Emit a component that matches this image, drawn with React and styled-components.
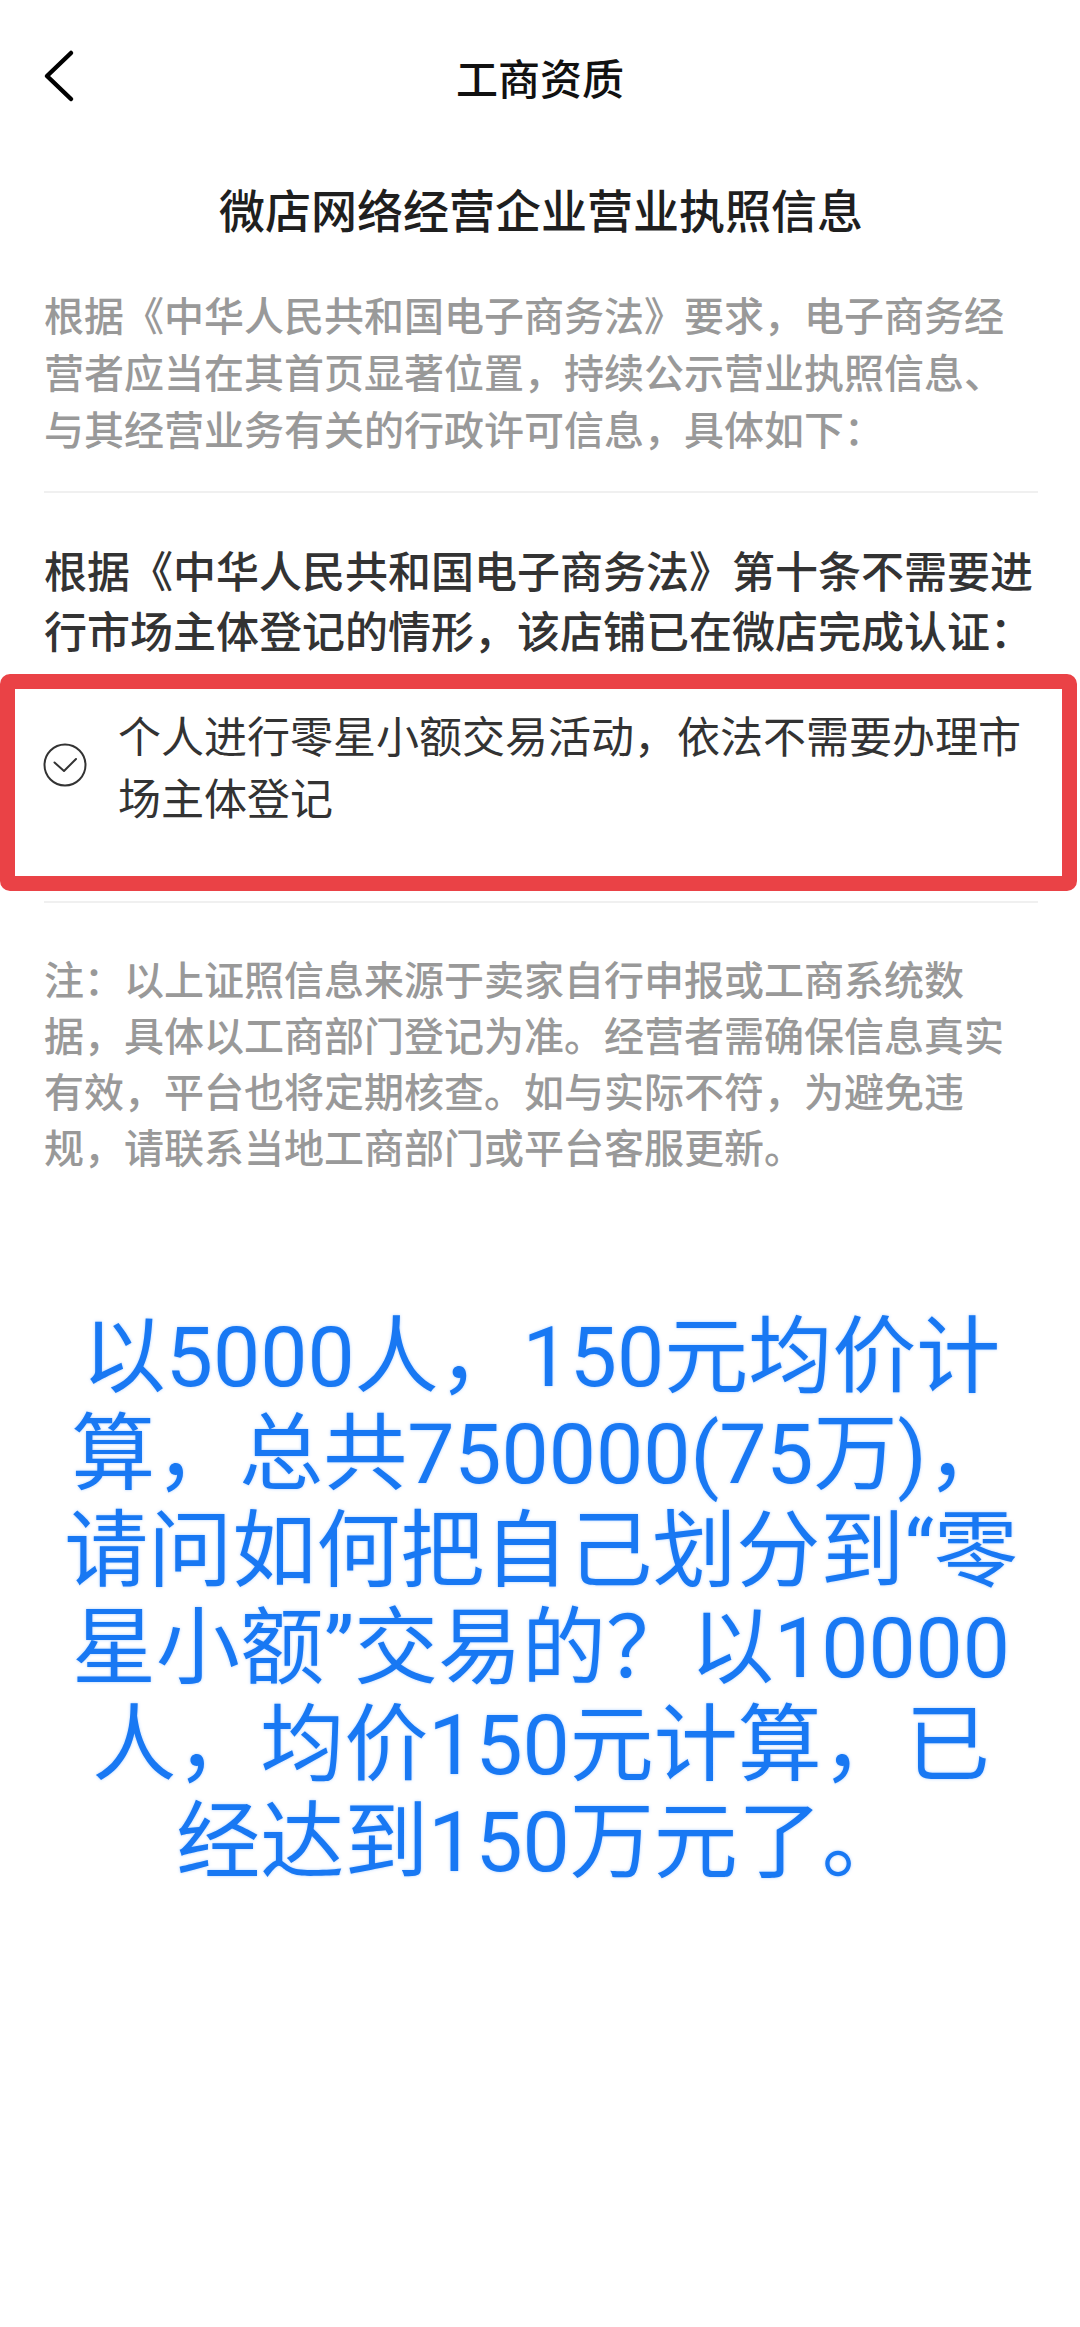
import React from 'react';
import styled, { createGlobalStyle } from 'styled-components';

const GlobalStyle = createGlobalStyle`
  html, body {
    margin: 0;
    padding: 0;
    background: #ffffff;
  }
  body {
    font-family: "Noto Sans CJK SC", "Noto Sans", sans-serif;
    -webkit-font-smoothing: antialiased;
  }
`;

const Page = styled.div`
  width: 1080px;
  min-height: 2327px;
  background: #ffffff;
  overflow: hidden;
`;

const NavBar = styled.header`
  height: 154px;
  display: grid;
  grid-template-columns: 1fr auto 1fr;
  align-items: center;
`;

const BackButton = styled.button`
  justify-self: start;
  margin-left: 40px;
  padding: 0;
  border: none;
  background: none;
  display: flex;
  align-items: center;
  cursor: pointer;
`;

const NavTitle = styled.h1`
  margin: 0;
  font-size: 42px;
  font-weight: 500;
  color: #111111;
  line-height: 1;
`;

const Content = styled.main`
  padding: 0 42px 0 44px;
`;

const Heading = styled.h2`
  margin: 24px 0 0;
  font-size: 46px;
  font-weight: 500;
  line-height: 60px;
  color: #1f1f1f;
  text-align: center;
`;

const Paragraph = styled.p`
  margin: ${(p) => p.$top}px 0 0;
  font-size: ${(p) => (p.$strong ? 43 : 40)}px;
  line-height: ${(p) => p.$lh}px;
  color: ${(p) => (p.$strong ? '#333333' : '#999999')};
  font-weight: 500;
`;

const Divider = styled.hr`
  margin: ${(p) => p.$top}px 0 0;
  border: none;
  height: 2px;
  background: #f0f0f0;
`;

const Highlight = styled.div`
  margin: 15px -39px 0 -44px;
  border: 15px solid #ea4246;
  border-radius: 10px;
  padding: 14px 20px 49px 28px;
  display: flex;
  align-items: center;
  gap: 31px;
`;

const CheckIcon = styled.svg`
  flex: none;
  width: 44px;
  height: 44px;
`;

const ItemText = styled.div`
  font-size: 43px;
  line-height: 62px;
  color: #333333;
`;

const Overlay = styled.div`
  margin-top: 135px;
  text-align: center;
  font-family: Roboto, "Noto Sans CJK SC", sans-serif;
  font-size: 84px;
  line-height: 97px;
  color: #1878f3;
  font-weight: 400;
  text-shadow: 0 0 3px rgba(90, 160, 255, 0.5);
`;

const OverlayLine = styled.div`
  white-space: nowrap;
`;

const overlayLines = [
  '以5000人，150元均价计',
  '算，总共750000(75万)，',
  '请问如何把自己划分到“零',
  '星小额”交易的？以10000',
  '人，均价150元计算，已',
  '经达到150万元了。',
];

const App = () => {
  return (
    <Page>
      <GlobalStyle />
      <NavBar>
        <BackButton aria-label="返回">
          <svg width="36" height="56" viewBox="0 0 36 56">
            <polyline
              points="31,4 7,27 31,50"
              fill="none"
              stroke="#000"
              strokeWidth="4.5"
              strokeLinecap="round"
              strokeLinejoin="round"
            />
          </svg>
        </BackButton>
        <NavTitle>工商资质</NavTitle>
        <span />
      </NavBar>
      <Content>
        <Heading>微店网络经营企业营业执照信息</Heading>
        <Paragraph $top={48} $lh={57}>
          根据《中华人民共和国电子商务法》要求，电子商务经营者应当在其首页显著位置，持续公示营业执照信息、与其经营业务有关的行政许可信息，具体如下：
        </Paragraph>
        <Divider $top={34} />
        <Paragraph $top={46} $lh={60} $strong>
          根据《中华人民共和国电子商务法》第十条不需要进行市场主体登记的情形，该店铺已在微店完成认证：
        </Paragraph>
        <Highlight>
          <CheckIcon viewBox="0 0 44 44">
            <circle cx="22" cy="22" r="20.5" fill="none" stroke="#333" strokeWidth="2" />
            <polyline
              points="11.5,19.5 21,28 33,16"
              fill="none"
              stroke="#333"
              strokeWidth="2"
              strokeLinecap="round"
              strokeLinejoin="round"
            />
          </CheckIcon>
          <ItemText>个人进行零星小额交易活动，依法不需要办理市场主体登记</ItemText>
        </Highlight>
        <Divider $top={10} />
        <Paragraph $top={47} $lh={56}>
          注：以上证照信息来源于卖家自行申报或工商系统数据，具体以工商部门登记为准。经营者需确保信息真实有效，平台也将定期核查。如与实际不符，为避免违规，请联系当地工商部门或平台客服更新。
        </Paragraph>
        <Overlay>
          {overlayLines.map((line) => (
            <OverlayLine key={line}>{line}</OverlayLine>
          ))}
        </Overlay>
      </Content>
    </Page>
  );
};

export default App;
